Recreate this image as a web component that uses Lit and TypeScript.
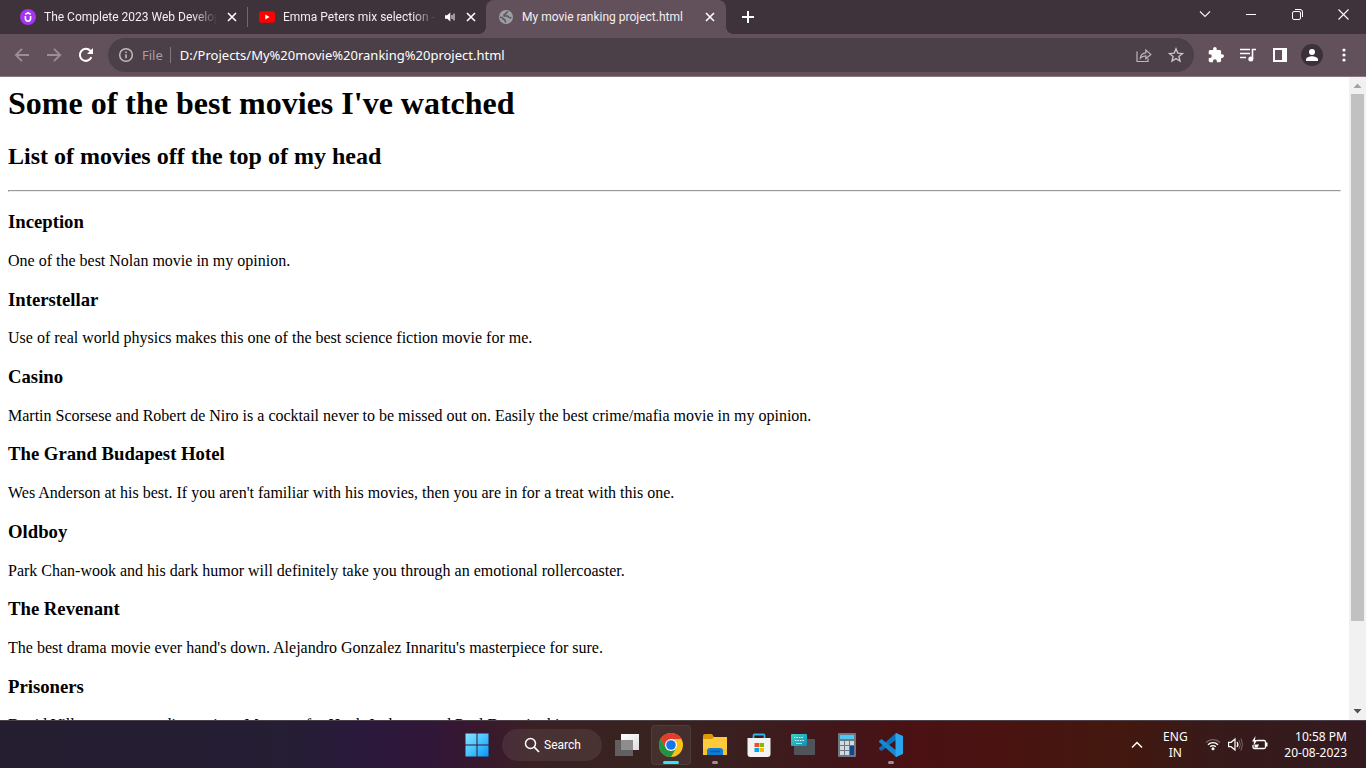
import { LitElement, html, css, svg } from "lit";
import { customElement } from "lit/decorators.js";

const icon = (size: number, box: number, body: unknown) =>
  html`<svg width=${size} height=${size} viewBox="0 0 ${box} ${box}" aria-hidden="true">${body}</svg>`;

const cross = svg`<path d="M1 1l8 8M9 1l-8 8" fill="none" stroke="#fff" stroke-width="1.6"/>`;

@customElement("browser-tabs")
export class BrowserTabs extends LitElement {
  static styles = css`
    :host { display: flex; height: 34px; background: #3f333b; color: #f3eef1; font: 12px/16px Roboto, "Open Sans", sans-serif; }
    button { border: 0; padding: 0; background: none; color: inherit; font: inherit; display: flex; align-items: center; justify-content: center; }
    svg { display: block; flex: none; }
    .tab { display: flex; align-items: center; width: 240px; height: 34px; box-sizing: border-box; padding: 0 11px 0 12px; }
    .first { width: 247px; padding-left: 20px; padding-right: 10px; }
    .second { width: 239px; }
    .bar { width: 1px; height: 20px; align-self: center; background: #74666f; }
    .title { flex: 1; min-width: 0; margin-left: 8px; overflow: hidden; white-space: nowrap; }
    .fade { -webkit-mask-image: linear-gradient(90deg, #000 calc(100% - 24px), transparent); mask-image: linear-gradient(90deg, #000 calc(100% - 24px), transparent); }
    .close { width: 10px; height: 10px; margin-left: 10px; }
    .second { width: 238px; padding-left: 11px; padding-right: 10px; }
    .sound { margin-left: 8px; }
    .active { position: relative; background: #62515b; border-radius: 8px 8px 0 0; }
    .active::before, .active::after { content: ""; position: absolute; bottom: 0; width: 8px; height: 8px; }
    .active::before { left: -8px; background: radial-gradient(circle at 0 0, transparent 8px, #62515b 8px); }
    .active::after { right: -8px; background: radial-gradient(circle at 100% 0, transparent 8px, #62515b 8px); }
    .add { width: 44px; }
    .window { display: flex; margin-left: auto; }
    .window button { width: 46px; height: 28px; }
  `;
  render() {
    return html`
      <div class="tab first">
        ${icon(16, 16, svg`<circle cx="8" cy="8" r="8" fill="#a435f0"/><path d="M5.4 7v2.6a2.6 2.6 0 0 0 5.2 0V7M5.3 5.4 8 3.7l2.7 1.7" fill="none" stroke="#fff" stroke-width="1.6"/>`)}
        <span class="title fade">The Complete 2023 Web Develop</span>
        <button class="close" aria-label="Close tab">${icon(10, 10, cross)}</button>
      </div>
      <div class="bar"></div>
      <div class="tab second">
        ${icon(16, 16, svg`<rect y="2.3" width="16" height="11.4" rx="2.8" fill="#f00"/><path d="M6.3 5.6v4.8L10.6 8z" fill="#fff"/>`)}
        <span class="title fade">Emma Peters mix selection - Y</span>
        <button class="sound" aria-label="Mute tab">${icon(12, 12, svg`<path d="M1 4.3h2.2L6.3 1.5v9L3.2 7.7H1z" fill="#fff"/><path d="M8 4v4M10 2.6v6.8" stroke="#fff"/>`)}</button>
        <button class="close" aria-label="Close tab">${icon(10, 10, cross)}</button>
      </div>
      <div class="tab active">
        ${icon(16, 16, svg`<circle cx="8" cy="8" r="7" fill="#9aa0a6"/><path d="M2 8.200c2.200 0 3.200.6 3.200 2 2 0 2.300.9 2.300 3.200M9.500 2.300c0 1.700-1.900 1.300-1.900 2.600-1.500 0-1.800.6-1.500 2h3.700c.4 1.600 1.600 2 3.600 1.700" fill="none" stroke="#62515b" stroke-width="1.500"/>`)}
        <span class="title">My movie ranking project.html</span>
        <button class="close" aria-label="Close tab">${icon(10, 10, cross)}</button>
      </div>
      <button class="add" aria-label="New tab">${icon(12, 12, svg`<path d="M6 0v12M0 6h12" stroke="#fff" stroke-width="2"/>`)}</button>
      <div class="window">
        <button aria-label="Search tabs">${icon(12, 12, svg`<path d="M1 3.5l5 5 5-5" fill="none" stroke="#eee" stroke-width="1.2"/>`)}</button>
        <button aria-label="Minimize">${icon(10, 10, svg`<path d="M0 5.5h10" stroke="#fff"/>`)}</button>
        <button aria-label="Restore">${icon(11, 11, svg`<rect x=".5" y="2.5" width="8" height="8" rx="1.5" fill="none" stroke="#fff"/><path d="M3 .5h5a2.5 2.5 0 0 1 2.5 2.500v5" fill="none" stroke="#fff"/>`)}</button>
        <button aria-label="Close window">${icon(11, 11, svg`<path d="M.5.5l10 10M10.5.5l-10 10" stroke="#fff" stroke-width="1.1"/>`)}</button>
      </div>`;
  }
}

@customElement("browser-toolbar")
export class BrowserToolbar extends LitElement {
  static styles = css`
    :host { display: flex; align-items: center; height: 43px; box-sizing: border-box; padding: 0 6px; background: #62515b; border-bottom: 1px solid #88777f; font: 13px/20px "Noto Sans", "Open Sans", sans-serif; }
    button { width: 32px; height: 32px; border: 0; padding: 0; background: none; display: flex; align-items: center; justify-content: center; }
    svg { display: block; flex: none; }
    .omnibox { flex: 1; display: flex; align-items: center; height: 34px; margin: 0 6px; padding: 0 2px 0 10px; border-radius: 17px; background: #4c4048; }
    .scheme { color: #a79fa4; margin-left: 8px; }
    .line { width: 1px; height: 16px; background: #82777e; margin: 0 9px 0 7px; }
    input { flex: 1; min-width: 0; padding: 0; border: 0; outline: 0; background: none; color: #fff; font: inherit; }
  `;
  render() {
    return html`
      <button aria-label="Back">${icon(16, 16, svg`<path d="M15 8H2M8 1.8 1.8 8 8 14.2" fill="none" stroke="#9b8e95" stroke-width="1.8"/>`)}</button>
      <button aria-label="Forward">${icon(16, 16, svg`<path d="M1 8h13M8 1.8 14.2 8 8 14.2" fill="none" stroke="#9b8e95" stroke-width="1.8"/>`)}</button>
      <button aria-label="Reload">${icon(16, 16, svg`<path d="M13.4 10.2A6 6 0 1 1 12.3 3.8L14 5.5" fill="none" stroke="#fff" stroke-width="2"/><path d="M15 1v6H9z" fill="#fff"/>`)}</button>
      <div class="omnibox">
        ${icon(16, 16, svg`<circle cx="8" cy="8" r="6.3" fill="none" stroke="#c0babd" stroke-width="1.5"/><path d="M8 7.2v4M8 4.4v1.7" stroke="#c0babd" stroke-width="1.6"/>`)}
        <label class="scheme" for="url">File</label>
        <span class="line"></span>
        <input id="url" value="D:/Projects/My%20movie%20ranking%20project.html" />
        <button aria-label="Share">${icon(16, 16, svg`<path d="M1 4.5v10h11v-3M4.3 11.2c.4-3.6 2.4-5.2 5.5-5.4V3l5 4.4-5 4.2V8.9c-2.4 0-4.1.7-5.5 2.3z" fill="none" stroke="#bdb6ba" stroke-width="1.2"/>`)}</button>
        <button aria-label="Bookmark">${icon(16, 16, svg`<path d="M8 1.8l1.8 4.3 4.7.4-3.6 3 1.1 4.6-4-2.5-4 2.5 1.1-4.6-3.6-3 4.7-.4z" fill="none" stroke="#c7c1c4" stroke-width="1.4"/>`)}</button>
      </div>
      <button aria-label="Extensions">${icon(16, 22, svg`<path d="M19.500 10H18V6c0-1.100-.9-2-2-2h-4V2.500a2.500 2.500 0 0 0-5 0V4H3c-1.100 0-2 .9-2 2v3.800h1.500a2.700 2.700 0 0 1 0 5.400H1V19c0 1.100.9 2 2 2h3.800v-1.500a2.700 2.700 0 0 1 5.400 0V21H16c1.100 0 2-.9 2-2v-4h1.500a2.500 2.500 0 0 0 0-5z" fill="#fff"/>`)}</button>
      <button aria-label="Media controls">${icon(16, 16, svg`<path d="M0 2.500h10M0 6.500h10M0 10.500h6M12.500 12V2.500H16" fill="none" stroke="#fff" stroke-width="1.600"/><circle cx="10.800" cy="12" r="2.500" fill="#fff"/>`)}</button>
      <button aria-label="Side panel">${icon(14, 14, svg`<path d="M0 0h14v14H0zM2 2v10h7V2z" fill="#fff" fill-rule="evenodd"/>`)}</button>
      <button aria-label="Profile">${icon(22, 22, svg`<circle cx="11" cy="11" r="11" fill="#3c3138"/><circle cx="11" cy="8" r="3" fill="#fff"/><path d="M5 17v-1.500c0-2 4-3.200 6-3.200s6 1.200 6 3.200V17z" fill="#fff"/>`)}</button>
      <button aria-label="Menu">${icon(16, 16, svg`<circle cx="8" cy="3" r="1.600" fill="#fff"/><circle cx="8" cy="8" r="1.600" fill="#fff"/><circle cx="8" cy="13" r="1.600" fill="#fff"/>`)}</button>`;
  }
}

const movies = [
  ["Inception", "One of the best Nolan movie in my opinion."],
  ["Interstellar", "Use of real world physics makes this one of the best science fiction movie for me."],
  ["Casino", "Martin Scorsese and Robert de Niro is a cocktail never to be missed out on. Easily the best crime/mafia movie in my opinion."],
  ["The Grand Budapest Hotel", "Wes Anderson at his best. If you aren't familiar with his movies, then you are in for a treat with this one."],
  ["Oldboy", "Park Chan-wook and his dark humor will definitely take you through an emotional rollercoaster."],
  ["The Revenant", "The best drama movie ever hand's down. Alejandro Gonzalez Innaritu's masterpiece for sure."],
  ["Prisoners", "David Villeneuve never disappoints. Must see for Hugh Jackman and Paul Dano in this one."],
];

@customElement("movie-page")
export class MoviePage extends LitElement {
  static styles = css`
    :host { display: flex; min-height: 0; background: #fff; color: #000; font: 16px "Liberation Serif", "Times New Roman", serif; }
    main { flex: 1; min-width: 0; padding: 8px; overflow: hidden; }
    h1 { margin-top: 0; }
    .scroll { width: 17px; display: flex; flex-direction: column; background: #f1f1f1; }
    .scroll svg { display: block; flex: none; }
    .track { flex: 1; padding: 0 2px; }
    .thumb { height: 86.5%; background: #c1c1c1; }
  `;
  render() {
    return html`
      <main>
        <h1>Some of the best movies I've watched</h1>
        <h2>List of movies off the top of my head</h2>
        <hr />
        ${movies.map(([name, note]) => html`<h3>${name}</h3><p>${note}</p>`)}
      </main>
      <div class="scroll">
        ${icon(17, 17, svg`<path d="M4.500 11l4-4.500 4 4.500z" fill="#a3a3a3"/>`)}
        <div class="track"><div class="thumb"></div></div>
        ${icon(17, 17, svg`<path d="M4.500 6h8l-4 4.500z" fill="#505050"/>`)}
      </div>`;
  }
}

@customElement("task-bar")
export class TaskBar extends LitElement {
  static styles = css`
    :host { display: grid; grid-template-columns: 1fr auto 1fr; align-items: center; height: 48px; box-sizing: border-box; border-top: 1px solid #4d424a; color: #fff; font: 12px/16px "Noto Sans", "Open Sans", sans-serif;
      background: linear-gradient(90deg, #251d30 0, #251e34 21%, #2a193c 26%, #301739 31%, #38182f 35%, #3a2023 39%, #38231f 48%, #3a1f1f 54%, #431519 62%, #4b1114 67%, #4a1311 73%, #43180f 82%, #371a1a 89%, #341a20 100%); }
    button { border: 0; padding: 0; background: none; color: inherit; font: inherit; }
    svg { display: block; flex: none; }
    .apps { grid-column: 2; display: flex; align-items: center; gap: 4px; padding-left: 2px; }
    .app { position: relative; width: 40px; height: 40px; display: flex; align-items: center; justify-content: center; border-radius: 4px; }
    .search { display: flex; align-items: center; gap: 4px; width: 100px; height: 32px; margin: 0 1px; padding-left: 22px; border-radius: 16px; background: #ffffff14; font-family: Roboto, "Open Sans", sans-serif; }
    .on { background: #ffffff10; box-shadow: inset 0 0 0 1px #ffffff10; }
    .run::after { content: ""; position: absolute; bottom: 1px; left: 17px; width: 6px; height: 3px; border-radius: 2px; background: #9d8f91; }
    .on::after { left: 12px; width: 16px; background: #2fe6fa; }
    .tray { grid-column: 3; justify-self: end; display: flex; align-items: center; padding-right: 19px; }
    .lang { width: 32px; margin: 0 14px 0 16px; text-align: center; }
    .status { display: flex; align-items: center; gap: 7px; }
    .clock { margin-left: 16px; text-align: right; }
  `;
  render() {
    return html`
      <nav class="apps" aria-label="Taskbar">
        <button class="app" aria-label="Start">${icon(24, 24, svg`<defs><linearGradient id="w" x2="1" y2="1"><stop stop-color="#8ae3ff"/><stop offset=".5" stop-color="#45c4ff"/><stop offset="1" stop-color="#0795f8"/></linearGradient></defs><path d="M.5.500H11.500v11H.5zM12.500.5h11v11h-11zM.5 12.500h11v11H.5zM12.500 12.500h11v11h-11z" fill="url(#w)"/>`)}</button>
        <button class="search">${icon(16, 16, svg`<circle cx="6.500" cy="6.500" r="5" fill="none" stroke="#fff" stroke-width="1.500"/><path d="M10.200 10.200 15 15" stroke="#fff" stroke-width="1.700"/>`)}<span>Search</span></button>
        <button class="app" aria-label="Task view">${icon(24, 24, svg`<defs><linearGradient id="t" x2="1" y2="1"><stop stop-color="#fff"/><stop offset="1" stop-color="#ddd"/></linearGradient></defs><path d="M6 1h18v16H6z" fill="url(#t)"/><path d="M0 7h18v16H0z" fill="#606060"/><path d="M6 7h12v10H6z" fill="#8d8d8d"/>`)}</button>
        <button class="app run on" aria-label="Chrome">${icon(24, 24, svg`<circle cx="12" cy="12" r="12" fill="#fbc116"/><path d="M1.600 6A12 12 0 0 1 22.400 6H12l-5.200 9z" fill="#e33b2e"/><path d="M1.600 6A12 12 0 0 0 12 24l5.200-9-5.200 3-5.200-3z" fill="#229342"/><circle cx="12" cy="12" r="6" fill="#fff"/><circle cx="12" cy="12" r="4.800" fill="#1a73e8"/>`)}</button>
        <button class="app run" aria-label="File Explorer">${icon(24, 24, svg`<path d="M0 3q0-2 2-2h7l2 3v5H0z" fill="#d99a06"/><path d="M0 6h9l2-2h13v18H0z" fill="#ffca3a"/><path d="M0 16h24v6H0z" fill="#f6b820" opacity=".6"/><path d="M4 22v-4q0-3 3-3h10q3 0 3 3v4z" fill="#127bd2"/><path d="M7 18.500h10" stroke="#0a5fad" stroke-width="1.500"/>`)}</button>
        <button class="app" aria-label="Microsoft Store">${icon(24, 24, svg`<path d="M6.500 6V2.500q0-1 1-1h9q1 0 1 1V6" fill="none" stroke="#30b5ec" stroke-width="1.800"/><path d="M.5 5h23v16q0 3-3 3h-17q-3 0-3-3z" fill="#f3f3f3"/><path d="M7.500 10H12v4H7.500z" fill="#f25022"/><path d="M12.500 10H17v4h-4.500z" fill="#7fba00"/><path d="M7.500 15H12v4H7.500z" fill="#00a4ef"/><path d="M12.500 15H17v4h-4.500z" fill="#ffb900"/>`)}</button>
        <button class="app" aria-label="On-screen keyboard">${icon(24, 24, svg`<defs><linearGradient id="k" y2="1"><stop stop-color="#3fd1c4"/><stop offset="1" stop-color="#138bb5"/></linearGradient></defs><rect x="3" y="6" width="21" height="16" rx="1" fill="#50545a"/><rect y="1" width="16" height="12" rx="1" fill="url(#k)"/><path d="M3 4.500h10M4 7.500h9" stroke="#fff" stroke-width="1.200" stroke-dasharray="1.300 1.200"/><path d="M5 10.500h6" stroke="#fff" stroke-opacity=".6"/>`)}</button>
        <button class="app" aria-label="Calculator">${icon(24, 24, svg`<rect x="3" width="18" height="24" rx="1" fill="#6d7883"/><path d="M5 2h14v4H5z" fill="#4cc9f0"/><path d="M5 8h4v4H5zM10 8h4v4h-4zM15 8h4v4h-4zM5 13h4v4H5zM10 13h4v4h-4zM5 18h4v4H5zM10 18h4v4h-4z" fill="#d4d9de"/><path d="M15 13h4v9h-4z" fill="#10478d"/>`)}</button>
        <button class="app run" aria-label="Visual Studio Code">${icon(24, 24, svg`<path d="M18 6 2.500 18 0 16V15L17 0l1 0z" fill="#0a72bd"/><path d="M18 18 2.500 6 0 8v1l17 15h1z" fill="#1688d3"/><path d="M17 0l7 3v18l-7 3V18z" fill="#2ba4ee"/><path d="M18 0v24l-1.500-1V1z" fill="#2ba4ee"/>`)}</button>
      </nav>
      <div class="tray">
        <button aria-label="Show hidden icons">${icon(12, 12, svg`<path d="M1 8.500l5-5 5 5" fill="none" stroke="#fff" stroke-width="1.500"/>`)}</button>
        <button class="lang">ENG<br />IN</button>
        <div class="status">
          ${icon(16, 16, svg`<path d="M1 5.500a10 10 0 0 1 14 0" fill="none" stroke="#79666a" stroke-width="1.300"/><path d="M3 7.700a7 7 0 0 1 10 0M5.200 9.800a4 4 0 0 1 5.600 0" fill="none" stroke="#fff" stroke-width="1.400"/><circle cx="8" cy="11.700" r="1.500" fill="#fff"/>`)}
          ${icon(16, 16, svg`<path d="M.6 5.300h2.500L7 2v11L3.100 9.700H.6z" fill="none" stroke="#fff" stroke-width="1.200"/><path d="M9 5q1.800 2.500 0 5" fill="none" stroke="#fff" stroke-width="1.200"/><path d="M11 3.200q2.800 4.300 0 8.600M13 1.500q3 6 0 12" fill="none" stroke="#79666a"/>`)}
          ${icon(17, 17, svg`<path d="M6 4.500h7q1.500 0 1.500 1.500v5q0 1.500-1.500 1.500H3.500Q2 12.500 2 11V9" fill="none" stroke="#fff" stroke-width="1.300"/><path d="M15 6.500h1.500v4H15zM3.500 8.500H8l-1.500 3h-3z" fill="#fff"/><path d="M4.500 0 1 5.500h2L2.500 9.500 6.500 4H4z" fill="#fff"/>`)}
        </div>
        <div class="clock">10:58 PM<br />20-08-2023</div>
      </div>`;
  }
}

@customElement("app-root")
export class AppRoot extends LitElement {
  static styles = css`
    :host { display: grid; grid-template-rows: auto auto minmax(0, 1fr) auto; height: 100vh; overflow: hidden; }
  `;
  render() {
    return html`<browser-tabs></browser-tabs><browser-toolbar></browser-toolbar><movie-page></movie-page><task-bar></task-bar>`;
  }
}
